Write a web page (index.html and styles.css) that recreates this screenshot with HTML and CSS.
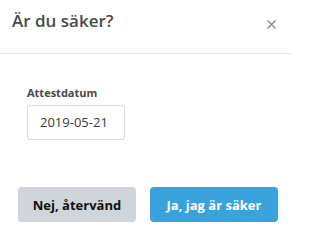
FILE: index.html
```html
<!DOCTYPE html>
<html lang="sv">
<head>
<meta charset="utf-8">
<link rel="stylesheet" href="styles.css">
</head>
<body>
<div class="modal">
  <div class="modal-header">
    <h2 class="title">Är du säker?</h2>
    <button class="close" aria-label="Stäng">
      <svg width="9" height="9" viewBox="0 0 9 9"><path d="M0.5 0.5L8.5 8.5M8.5 0.5L0.5 8.5" stroke="#8a8a8a" stroke-width="1.4"/></svg>
    </button>
  </div>
  <div class="modal-body">
    <label class="label">Attestdatum</label>
    <div class="input">2019-05-21</div>
  </div>
  <div class="modal-footer">
    <button class="btn btn-gray">Nej, återvänd</button>
    <button class="btn btn-blue">Ja, jag är säker</button>
  </div>
</div>
</body>
</html>
```
FILE: styles.css
```css
html, body {
  margin: 0;
  padding: 0;
  background: #fff;
}
body {
  font-family: "Open Sans", "Liberation Sans", sans-serif;
  width: 291px;
  height: 232px;
  overflow: hidden;
}
.modal-header {
  height: 54px;
  border-bottom: 1px solid #e6e6e6;
  display: flex;
  align-items: flex-start;
  justify-content: space-between;
  padding: 0 15px 0 12px;
  box-sizing: border-box;
}
.title {
  margin: 10px 0 0;
  font-size: 17px;
  font-weight: 600;
  color: #4a4a4a;
  line-height: 22px;
}
.close {
  margin-top: 20px;
  padding: 0;
  border: 0;
  background: none;
  width: 9px;
  height: 9px;
  display: flex;
}
.modal-body {
  padding: 31px 0 0 27px;
  display: flex;
  flex-direction: column;
  align-items: flex-start;
}
.label {
  font-size: 11px;
  font-weight: 700;
  color: #4a4a4a;
  line-height: 16px;
  margin-bottom: 4px;
}
.input {
  width: 98px;
  height: 35px;
  box-sizing: border-box;
  border: 1px solid #d9d9d9;
  border-radius: 3px;
  font-size: 13px;
  color: #3a3a3a;
  line-height: 33px;
  padding-left: 12px;
}
.modal-footer {
  display: flex;
  gap: 14px;
  padding: 47px 0 0 18px;
}
.btn {
  height: 35px;
  border: 0;
  border-radius: 4px;
  font-family: "Open Sans", "Liberation Sans", sans-serif;
  font-size: 13px;
  font-weight: 700;
  padding: 0;
}
.btn-gray {
  width: 118px;
  background: #d0d4db;
  color: #111;
}
.btn-blue {
  width: 128px;
  background: #3aa3dd;
  color: #fff;
}
```
